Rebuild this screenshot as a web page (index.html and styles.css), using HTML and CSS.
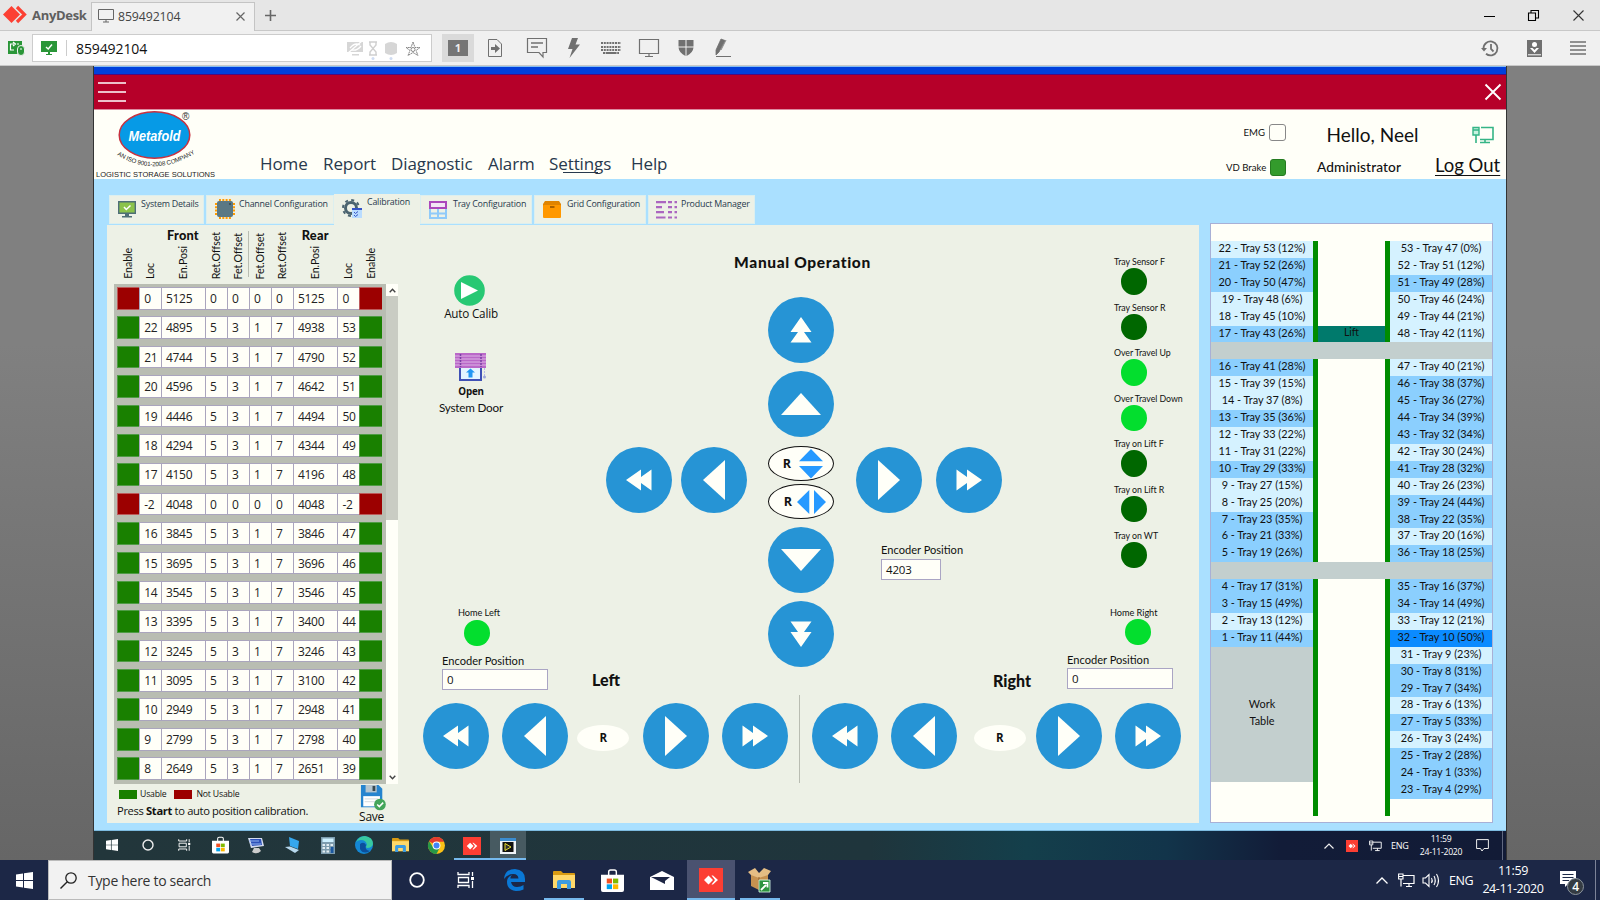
FILE: index.html
```html
<!DOCTYPE html>
<html lang="en">
<head>
<meta charset="utf-8">
<title>AnyDesk - 859492104</title>
<link rel="stylesheet" href="styles.css">
</head>
<body>
<svg class="defs" width="0" height="0">
  <symbol id="one" viewBox="0 0 66 66"><circle cx="33" cy="33" r="33" fill="#2694d5"/><path d="M22 13L44 33L22 53Z" fill="#fffff8"/></symbol>
  <symbol id="two" viewBox="0 0 66 66"><circle cx="33" cy="33" r="33" fill="#2694d5"/><path d="M20.500 22.500L31 30V22.500L46 33L31 43.500V36L20.500 43.500Z" fill="#fffff8"/></symbol>
  <symbol id="win" viewBox="0 0 17 17"><path d="M0 2.500L7 1.500V8H0ZM8 1.300L17 0V8H8ZM0 9H7V15.500L0 14.500ZM8 9H17V17L8 15.700Z" fill="#fff"/></symbol>
  <symbol id="taskview" viewBox="0 0 18 16"><path d="M1 0V2.500H12V0M1 16V13.500H12V16M1.500 5.500H11.500V10.500H1.500ZM15.500 0V4M15.500 9V16" fill="none" stroke="#fff" stroke-width="1.300"/><rect x="14" y="5" width="3" height="3" fill="#fff"/></symbol>
  <symbol id="folder" viewBox="0 0 22 18"><path d="M0 1Q0 0 1 0H8L10 2H21Q22 2 22 3V17H0Z" fill="#d99b12"/><path d="M0 4H22V17H0Z" fill="#ffd869"/><path d="M4 18V11Q4 9 6 9H16Q18 9 18 11V18H14V13H8V18Z" fill="#3c9be0"/></symbol>
  <symbol id="store" viewBox="0 0 24 24"><path d="M8 7V3Q8 1 10 1H14Q16 1 16 3V7" fill="none" stroke="#fff" stroke-width="1.500"/><path d="M0 6H24V22Q24 24 22 24H2Q0 24 0 22Z" fill="#fff"/><path d="M6 10H11.500V15H6Z" fill="#f25022"/><path d="M12.500 10H18V15H12.500Z" fill="#7fba00"/><path d="M6 16H11.500V21H6Z" fill="#00a4ef"/><path d="M12.500 16H18V21H12.500Z" fill="#ffb900"/></symbol>
  <symbol id="desk" viewBox="0 0 24 24"><path d="M0 0H24V24H0Z" fill="#fc3e33"/><path d="M5 12L9.500 7.500L14 12L9.500 16.500ZM12.500 7.500H14L19 12L14 16.500H12.500L16 12Z" fill="#fff"/></symbol>
  <symbol id="net" viewBox="0 0 17 15"><path d="M5 2.500H16V10.500H5M8 13.500H14M11 10.500V13.500M3 6V13.500" fill="none" stroke="currentColor" stroke-width="1.200"/><path d="M.6 1H5V6H.6ZM.6 3.500H5" fill="none" stroke="currentColor" stroke-width="1.100"/></symbol>
  <symbol id="hostnet" viewBox="0 0 22 18"><path d="M9 1.500H21V13.500H8M8 16.500H18M13 13.500V16.500M4 9V17" fill="none" stroke="#35b586" stroke-width="1.600"/><path d="M1 1.500H7V9H1ZM1 4H7" fill="#c9f2e0" stroke="#35b586" stroke-width="1.400"/></symbol>
</svg>

<header class="titlebar">
  <div class="brand"><svg width="24" height="17" viewBox="0 0 24 17"><path d="M0 8.500L8.500 0L17 8.500L8.500 17Z" fill="#fc4033"/><path d="M14 1L21.500 8.500L14 16" fill="none" stroke="#fc4033" stroke-width="3.200"/></svg><b>AnyDesk</b></div>
  <div class="session"><svg width="16" height="14" viewBox="0 0 16 14"><path d="M.5 .5H15.500V10.500H.5ZM8 10.500V13M5 13H11" fill="none" stroke="#666"/></svg><span>859492104</span><svg class="x" width="9" height="9" viewBox="0 0 9 9"><path d="M.5 .5L8.500 8.500M8.500 .5L.5 8.500" stroke="#666" stroke-width="1.200"/></svg></div>
  <svg class="plus" width="11" height="11" viewBox="0 0 11 11"><path d="M5.500 0V11M0 5.500H11" stroke="#666" stroke-width="1.600"/></svg>
  <div class="winbtns">
    <svg width="11" height="11" viewBox="0 0 11 11"><path d="M0 6.500H11" stroke="#000"/></svg>
    <svg width="11" height="11" viewBox="0 0 11 11"><path d="M.5 3H7.500V10.500H.5ZM3 3V.5H10.500V8H7.500" fill="none" stroke="#000" stroke-width="1.100"/></svg>
    <svg width="11" height="11" viewBox="0 0 11 11"><path d="M.5 .5L10.500 10.500M10.500 .5L.5 10.500" stroke="#333" stroke-width="1.100"/></svg>
  </div>
</header>

<div class="toolbar">
  <svg class="privacy" width="17" height="16" viewBox="0 0 17 16"><path d="M0 1H14V7L9 14H0Z" fill="#2a9638"/><path d="M6 4H2.500V10H6M5 2L7.500 4L5 6M9 4H11" fill="none" stroke="#fff" stroke-width="1.200"/><rect x="9.500" y="5.500" width="7" height="10" rx="3.500" fill="#2a9638" stroke="#f0f0f0"/><path d="M13 8V10" stroke="#fff"/></svg>
  <div class="address">
    <svg width="16" height="14" viewBox="0 0 16 14"><path d="M0 0H16V11H0ZM7 11H9V13H7ZM5 13H11V14H5Z" fill="#2a9638"/><path d="M5 6L7.200 8L11 3.500" fill="none" stroke="#fff" stroke-width="1.400"/></svg>
    <i></i><span>859492104</span>
    <svg class="marks" width="74" height="20" viewBox="0 0 74 20"><path d="M0 2H16V12H0ZM5 14H12V15.500H5Z" fill="#d6d6d6"/><path d="M1 13L15 1M3 8Q8 2 13 5M5 10Q10 11 14 6" fill="none" stroke="#fff" stroke-width="1.300"/><path d="M22 2H30M22 15H30M23 2V5L26 8.500L29 5V2M23 15V12L26 8.500L29 12V15" fill="none" stroke="#cfcfcf" stroke-width="1.400"/><path d="M38 4Q44 0 50 4V13Q44 17 38 13Z" fill="#d6d6d6"/><path d="M66 2L68 7.500H73L69 10.500L71 15.500L66 12.500L61 15.500L63 10.500L59 7.500H64Z" fill="none" stroke="#888" stroke-dasharray="2 .5"/><circle cx="66" cy="9.500" r="2" fill="none" stroke="#888"/><circle cx="26" cy="18.500" r="1.500" fill="#cfdcf2"/><circle cx="44" cy="18.500" r="1.500" fill="#cfdcf2"/></svg>
  </div>
  <div class="monitor"><b>1</b></div>
  <div class="tools">
    <svg width="20" height="20" viewBox="0 0 20 20"><path d="M3.500 1.500H12L16.500 6V18.500H3.500Z" fill="none" stroke="#707070"/><path d="M6 9H10V6L15 10.500L10 15V12H6Z" fill="#707070"/></svg>
    <svg width="20" height="20" viewBox="0 0 20 20"><path d="M.5 .5H19.500V14.500H16V19L12 14.500H.5Z" fill="none" stroke="#707070" stroke-width="1.200"/><path d="M4 5H16M4 9H11" stroke="#707070" stroke-width="1.300"/></svg>
    <svg width="20" height="20" viewBox="0 0 20 20"><path d="M8 0H14L11.500 6.500H16L5.500 20L8.500 11H4Z" fill="#707070"/></svg>
    <svg width="20" height="20" viewBox="0 0 20 20"><path d="M0 5H20M0 9H20M0 12H20" stroke="#707070" stroke-width="2" stroke-dasharray="2 .8"/><path d="M2 15H18" stroke="#707070" stroke-width="2" stroke-dasharray="2 .6 11 .6 2"/></svg>
    <svg width="20" height="20" viewBox="0 0 20 20"><path d="M.5 1.500H19.500V15.500H.5ZM10 15V18M6 18.500H14" fill="none" stroke="#707070" stroke-width="1.200"/></svg>
    <svg width="20" height="20" viewBox="0 0 20 20"><path d="M2.500 2H9.500V8.500H2.500ZM10.500 2H17.500V8.500H10.500ZM2.500 9.500H9.500V18Q3 15 2.500 9.500ZM10.500 9.500H17.500Q17 15 10.500 18Z" fill="#707070"/></svg>
    <svg width="20" height="20" viewBox="0 0 20 20"><path d="M8 1L12 2.500L6 14L3 17V12ZM13 2L8 12" fill="#707070" stroke="#707070" stroke-width=".8"/><path d="M3 18.500H18" stroke="#707070"/></svg>
  </div>
  <div class="tools-end">
    <svg width="18" height="17" viewBox="0 0 18 17"><path d="M2.500 8.500A7 7 0 1 1 5 13.800M10 4V9L12.500 11.500" fill="none" stroke="#707070" stroke-width="1.800"/><path d="M0 8H6L3 11.500Z" fill="#707070"/></svg>
    <svg width="15" height="17" viewBox="0 0 15 17"><path d="M0 0H15V17H0Z" fill="#707070"/><circle cx="7.500" cy="4.500" r="2.500" fill="#fff"/><path d="M3 8H5.500L7.500 10L9.500 8H12L7.500 13Z" fill="#fff"/><path d="M1 14.800H14" stroke="#fff"/></svg>
    <svg width="16" height="14" viewBox="0 0 16 14"><path d="M0 1H16M0 5H16M0 9H16M0 13H16" stroke="#707070" stroke-width="1.700"/></svg>
  </div>
</div>

<main class="viewport">
<div class="remote">
  <div class="strip"></div>
  <div class="appbar">
    <svg width="28" height="20" viewBox="0 0 28 20"><path d="M0 1H28M0 10H28M0 19H28" stroke="#fff" stroke-width="1.400"/></svg>
    <svg width="16" height="16" viewBox="0 0 16 16"><path d="M.5 .5L15.500 15.500M15.500 .5L.5 15.500" stroke="#fff" stroke-width="1.900"/></svg>
  </div>
  <div class="apphead">
    <svg class="logo" width="124" height="70" viewBox="0 0 124 70">
      <ellipse cx="60.500" cy="25" rx="35.300" ry="23.300" fill="#069ae6" stroke="#c8313f" stroke-width="1.500"/>
      <text class="logo-name" x="60.500" y="30.500" text-anchor="middle" textLength="52" lengthAdjust="spacingAndGlyphs">Metafold</text>
      <text class="logo-r" x="88" y="10">®</text>
      <path id="arc" d="M23 45Q60 68 100 44" fill="none"/>
      <text class="logo-iso"><textPath href="#arc">AN ISO 9001-2008 COMPANY</textPath></text>
      <text class="logo-sub" x="2" y="67" textLength="119" lengthAdjust="spacingAndGlyphs">LOGISTIC STORAGE SOLUTIONS</text>
    </svg>
    <nav class="mainnav"><span>Home</span><span>Report</span><span>Diagnostic</span><span>Alarm</span><span class="on">Settings</span><span>Help</span></nav>
    <div class="flags"><div>EMG<i></i></div><div>VD Brake<i class="g"></i></div></div>
    <div class="user"><span class="hello">Hello, Neel</span><span class="role">Administrator</span></div>
    <div class="logout"><svg width="22" height="18"><use href="#hostnet"/></svg><span>Log Out</span></div>
  </div>

  <div class="body">
    <div class="work">
      <div class="tabs">
        <div class="tab t1"><svg width="18" height="17" viewBox="0 0 18 17"><path d="M.7 .7H17.300V12.300H.7Z" fill="#8bc34a" stroke="#4f6f78" stroke-width="1.400"/><path d="M7 13H11V15H14V16.500H4V15H7Z" fill="#4f6f78"/><path d="M6 6L8.300 8.500L12.500 4.500" fill="none" stroke="#fff" stroke-width="1.500"/></svg>System Details</div>
        <div class="tab t2"><svg width="20" height="20" viewBox="0 0 20 20"><path d="M4 1H17M4 19H17M1 4V17M19 4V17" stroke="#ff9b00" stroke-width="2" stroke-dasharray="2 1.300"/><rect x="2" y="2" width="16" height="16" rx="2" fill="#5a7884"/><circle cx="15" cy="5" r="1" fill="#37474f"/></svg>Channel Configuration</div>
        <div class="tab t3"><svg width="20" height="19" viewBox="0 0 20 19"><circle cx="9" cy="9" r="5.500" fill="none" stroke="#4b6470" stroke-width="3"/><circle cx="9" cy="9" r="8" fill="none" stroke="#4b6470" stroke-width="2" stroke-dasharray="3 3.280"/><path d="M10 9H20V19H10Z" fill="#b9dcff"/><path d="M10 9H20V11H10Z" fill="#3454c6"/><path d="M12 13L13.500 14.500L16 12.500M12 16L13.500 17.500L16 15.500" fill="none" stroke="#3454c6"/></svg>Calibration</div>
        <div class="tab t4"><svg width="18" height="18" viewBox="0 0 18 18"><path d="M1 8V17H17V8M1 12.500H17M9 8V17" fill="none" stroke="#90caf9" stroke-width="2"/><path d="M1 1H17V7H1Z" fill="#f3e5f5" stroke="#ab47bc" stroke-width="2"/></svg>Tray Configuration</div>
        <div class="tab t5"><svg width="18" height="17" viewBox="0 0 18 17"><path d="M2 0H16L18 3V6H0V3Z" fill="#e08400"/><rect y="4" width="18" height="13" rx="1" fill="#ff9800"/><path d="M7 6H11.500" stroke="#7a4300" stroke-width="1.300"/></svg>Grid Configuration</div>
        <div class="tab t6"><svg width="21" height="18" viewBox="0 0 21 18"><path d="M0 1.200H10M0 6.200H6M0 11.200H8M0 16.500H9.500M12 1.200H16M12 6.200H16M12 11.200H16M12 16.500H16M18.500 1.200H21M18.500 6.200H21M18.500 11.200H21M18.500 16.500H21" stroke="#ab66c0" stroke-width="2.200"/></svg>Product Manager</div>
      </div>
      <div class="panel">
        <section class="calib">
          <div class="cols head">
            <span><em>Enable</em></span><span><em>Loc</em></span><span><b>Front</b><em>En.Posi</em></span><span><em>Ret.Offset</em></span><span class="sep"><em>Fet.Offset</em></span><span><em>Fet.Offset</em></span><span><em>Ret.Offset</em></span><span><b>Rear</b><em>En.Posi</em></span><span><em>Loc</em></span><span><em>Enable</em></span>
          </div>
          <div class="grid"><div class="rows" id="rows"></div>
            <div class="scroll"><svg width="7" height="5" viewBox="0 0 7 5"><path d="M.7 4.300L3.500 1.300L6.300 4.300" fill="none" stroke="#444" stroke-width="1.400"/></svg><i></i><svg width="7" height="5" viewBox="0 0 7 5"><path d="M.7 .7L3.500 3.700L6.300 .7" fill="none" stroke="#444" stroke-width="1.400"/></svg></div>
          </div>
          <div class="foot">
            <div><p class="legend"><i></i><span>Usable</span><i class="r"></i><span>Not Usable</span></p><p class="hint">Press <b>Start</b> to auto position calibration.</p></div>
            <div class="save"><svg width="28" height="28" viewBox="0 0 28 28"><path d="M1 0H20L24 4V24H1Z" fill="#2584cf"/><path d="M6 0H18V8H6Z" fill="#b5c5cf"/><path d="M13.500 1H16.500V6.500H13.500Z" fill="#37474f"/><path d="M3.500 12H21.500V23H3.500Z" fill="#fff"/><path d="M5 15H20M5 18H20" stroke="#cfd8dc"/><circle cx="21.500" cy="21" r="6.300" fill="#43a55a"/><path d="M18.500 21L20.800 23.300L25 19" fill="none" stroke="#fff" stroke-width="1.600"/></svg><span>Save</span></div>
          </div>
        </section>

        <section class="manual">
          <div class="upper">
            <div class="side left">
              <div class="act a1"><svg width="31" height="31" viewBox="0 0 31 31"><circle cx="15.500" cy="15.500" r="15.300" fill="#27c873"/><path d="M7 7L24 15.500L7 24Z" fill="#fff"/></svg><span>Auto Calib</span></div>
              <div class="act a2"><svg width="32" height="28" viewBox="0 0 32 28"><path d="M5 12H26V27H5Z" fill="#e3f4ff" stroke="#3f51b5" stroke-width="2"/><path d="M13.500 24.500V19.500H11L15.500 15.500L20 19.500H17.500V24.500Z" fill="#2196f3"/><path d="M0 0H31V15H0Z" fill="#ba68c8"/><path d="M0 3H31M0 6H31M0 9H31M0 12H31" stroke="#dcb5e6" stroke-width="1"/><path d="M5.500 1V14M26 1V14" stroke="#7b3fa5" stroke-width="1.500" stroke-dasharray="2 1"/><path d="M29.500 15V23" stroke="#b7bbe8" stroke-dasharray="2 1"/><circle cx="29.500" cy="24" r="1.500" fill="#9fa8da"/></svg><b>Open</b><span class="fut">System Door</span></div>
              <div class="home hl"><small>Home Left</small><i class="lamp on"></i></div>
              <div class="enc-row"><div class="enc"><label>Encoder Position</label><div class="box">0</div></div><strong>Left</strong></div>
            </div>
            <div class="middle">
              <h2>Manual Operation</h2>
              <div class="pad">
                <svg class="b c5 r1 up"><use href="#two"/></svg>
                <svg class="b c5 r2 up"><use href="#one"/></svg>
                <svg class="b c1 r3 back"><use href="#two"/></svg>
                <svg class="b c3 r3 back"><use href="#one"/></svg>
                <div class="ovals c5 r3">
                  <div class="oval"><b>R</b><svg width="24" height="30" viewBox="0 0 24 30"><path d="M12 0L24 12.300H0ZM0 17H24L12 29.500Z" fill="#2699ff"/></svg></div>
                  <div class="oval"><b>R</b><svg width="29" height="24" viewBox="0 0 29 24"><path d="M12.300 0V24L0 12ZM17 0V24L29 12Z" fill="#2699ff"/></svg></div>
                </div>
                <svg class="b c7 r3"><use href="#one"/></svg>
                <svg class="b c9 r3"><use href="#two"/></svg>
                <svg class="b c5 r4 down"><use href="#one"/></svg>
                <div class="enc mid r4"><label>Encoder Position</label><div class="box">4203</div></div>
                <svg class="b c5 r5 down"><use href="#two"/></svg>
              </div>
            </div>
            <div class="side right">
              <div class="sensors">
                <div><small>Tray Sensor F</small><i class="lamp"></i></div>
                <div><small>Tray Sensor R</small><i class="lamp"></i></div>
                <div><small>Over Travel Up</small><i class="lamp on"></i></div>
                <div><small>Over Travel Down</small><i class="lamp on"></i></div>
                <div><small>Tray on Lift F</small><i class="lamp"></i></div>
                <div><small>Tray on Lift R</small><i class="lamp"></i></div>
                <div><small>Tray on WT</small><i class="lamp"></i></div>
              </div>
              <div class="home hr"><small>Home Right</small><i class="lamp on"></i></div>
              <div class="enc-row"><strong>Right</strong><div class="enc"><label>Encoder Position</label><div class="box">0</div></div></div>
            </div>
          </div>
          <div class="lower">
            <div class="jog"><svg class="b back"><use href="#two"/></svg><svg class="b back"><use href="#one"/></svg><b class="reset">R</b><svg class="b"><use href="#one"/></svg><svg class="b"><use href="#two"/></svg></div>
            <div class="jog"><svg class="b back"><use href="#two"/></svg><svg class="b back"><use href="#one"/></svg><b class="reset">R</b><svg class="b"><use href="#one"/></svg><svg class="b"><use href="#two"/></svg></div>
          </div>
        </section>
      </div>
    </div>
    <aside class="rack" id="rack"></aside>
  </div>

  <div class="rtask">
    <div class="slots">
      <span><svg width="12" height="12"><use href="#win"/></svg></span>
      <span><svg width="12" height="12" viewBox="0 0 12 12"><circle cx="6" cy="6" r="5" fill="none" stroke="#eee" stroke-width="1.400"/></svg></span>
      <span><svg width="13" height="12"><use href="#taskview"/></svg></span>
      <span><svg width="17" height="18"><use href="#store"/></svg></span>
      <span><svg width="18" height="17" viewBox="0 0 18 17"><path d="M1 1H15L17 9L4 11Z" fill="#d5dcee"/><path d="M3 2L14 2L15 8L5 9Z" fill="#2d50b8"/><path d="M2 4H12M3 7H14" stroke="#8fb2f0"/><path d="M7 11H12L14 14Q10 18 5 15Z" fill="#ccc"/></svg></span>
      <span><svg width="17" height="16" viewBox="0 0 17 16"><path d="M5 0L15 4L14 12L6 9Z" fill="#35a7ee"/><path d="M1 10L6 9.500L15 13L11 16Z" fill="#b8d9ee"/></svg></span>
      <span><svg width="14" height="17" viewBox="0 0 14 17"><path d="M0 0H14V17H0Z" fill="#7d9cae"/><path d="M1.500 1.500H12.500V5H1.500Z" fill="#cdf0ff"/><path d="M1.500 8H13M1.500 11H13M1.500 14.500H13" stroke="#e2edf2" stroke-width="2" stroke-dasharray="2.500 1.500"/><path d="M9.500 10H12.500V16H9.500Z" fill="#1b58a0"/></svg></span>
      <span><svg width="18" height="18" viewBox="0 0 18 18"><circle cx="9" cy="9" r="9" fill="#1487d4"/><path d="M1 6Q4 0 10 0Q18 1 18 8Q17 12 12 12Q10 11 12 9Q11 4 6 4Q3 4 1 6Z" fill="#38c9a0"/><path d="M5 8Q9 5 11 9Q9 14 15 15Q8 19 5 13Z" fill="#0b4f9c"/></svg></span>
      <span><svg width="17" height="14"><use href="#folder"/></svg></span>
      <span><svg width="17" height="17" viewBox="0 0 18 18"><circle cx="9" cy="9" r="9" fill="#fbc116"/><path d="M9 9L1.200 4.500A9 9 0 0 1 17 5H9Z" fill="#e33b2e"/><path d="M1.200 4.500A9 9 0 0 0 9 18L12.500 11L5.500 11Z" fill="#279847"/><circle cx="9" cy="9" r="4.200" fill="#fff"/><circle cx="9" cy="9" r="3.200" fill="#4285f4"/></svg></span>
      <span class="run"><svg width="18" height="18"><use href="#desk"/></svg></span>
      <span class="run act"><svg width="16" height="16" viewBox="0 0 16 16"><path d="M0 0H16V16H0Z" fill="#f0f4f8"/><path d="M0 0H16V3H0Z" fill="#3b8ccf"/><path d="M2.500 4H13.500V14H2.500Z" fill="#111"/><path d="M5 5.500L11 9L5 12.500Z" fill="#333" stroke="#e8df30"/></svg></span>
    </div>
    <div class="rtray">
      <svg width="10" height="6" viewBox="0 0 10 6"><path d="M.5 5.500L5 1L9.500 5.500" fill="none" stroke="#eee" stroke-width="1.200"/></svg>
      <svg width="12" height="12"><use href="#desk"/></svg>
      <svg class="net" width="13" height="12"><use href="#net"/></svg>
      <span class="eng">ENG</span><span class="clock">11:59<br>24-11-2020</span>
      <svg width="13" height="13" viewBox="0 0 13 13"><path d="M.6 .6H12.400V9.500H8L6 12L4.500 9.500H.6Z" fill="none" stroke="#eee"/></svg><i></i>
    </div>
  </div>
</div>
</main>

<footer class="taskbar">
  <span class="start"><svg width="17" height="17"><use href="#win"/></svg></span>
  <div class="search"><svg width="17" height="17" viewBox="0 0 17 17"><circle cx="11" cy="6" r="5.200" fill="none" stroke="#222" stroke-width="1.300"/><path d="M7.300 9.700L.5 16.500" stroke="#222" stroke-width="1.400"/></svg>Type here to search</div>
  <div class="slots">
    <span><svg width="16" height="16" viewBox="0 0 16 16"><circle cx="8" cy="8" r="6.800" fill="none" stroke="#fff" stroke-width="1.800"/></svg></span>
    <span><svg width="18" height="16"><use href="#taskview"/></svg></span>
    <span><svg width="21" height="22" viewBox="0 0 21 22"><path d="M0 10Q1 0 11 0Q21 1 21 10V13H7Q8 18 13 18Q17 18 19.500 16V20.500Q16 22 12 22Q3 21 3 13Q3 8 8 6Q6 8 6.500 9.500H14.500Q14 5 9.500 5Q3 5 0 10Z" fill="#0a78d6"/></svg></span>
    <span class="run"><svg width="22" height="18"><use href="#folder"/></svg></span>
    <span><svg width="23" height="23"><use href="#store"/></svg></span>
    <span><svg width="24" height="19" viewBox="0 0 24 19"><path d="M12 0L24 6V19H0V6Z" fill="#fff"/><path d="M1 6L20 6L15 10V13L11 11Z" fill="#1c2544"/></svg></span>
    <span class="run act"><svg width="24" height="24"><use href="#desk"/></svg></span>
    <span class="run"><svg width="24" height="25" viewBox="0 0 24 25"><path d="M3 6L11 9L20 5V19L11 22L3 18Z" fill="#c69150"/><path d="M0 4L7 0L11 5L16 0L23 3L20 7L11 10L3 7Z" fill="#e5bd84"/><path d="M11 9V22" stroke="#8d5f2b"/><path d="M11 12H22V24H11Z" fill="#2e9440" stroke="#dfe" stroke-width=".8"/><path d="M13 22L18 17M15 15H19.500V19.500" fill="none" stroke="#fff" stroke-width="1.800"/></svg></span>
  </div>
  <div class="tray">
    <svg width="12" height="7" viewBox="0 0 12 7"><path d="M.5 6.500L6 1L11.500 6.500" fill="none" stroke="#fff" stroke-width="1.300"/></svg>
    <svg class="net" width="17" height="15"><use href="#net"/></svg>
    <svg width="18" height="15" viewBox="0 0 18 15"><path d="M1 5H3.500L7 1.500V13.500L3.500 10H1ZM9.500 5Q11 7.500 9.500 10M12 3Q14.500 7.500 12 12M14.500 1Q18.500 7.500 14.500 14" fill="none" stroke="#fff" stroke-width="1.100"/></svg>
    <span class="eng">ENG</span><span class="clock">11:59<br>24-11-2020</span>
    <svg class="note" width="25" height="24" viewBox="0 0 25 24"><path d="M0 0H16V13H8L5 16V13H0Z" fill="#fff"/><path d="M2.500 3.500H13.500M2.500 6.500H13.500M2.500 9.500H9" stroke="#1c2a48" stroke-width="1.200"/><circle cx="15.500" cy="15.500" r="8" fill="#343b42" stroke="#8b949e"/><text x="15.500" y="20" text-anchor="middle">4</text></svg><i></i>
  </div>
</footer>
<script src="app.js"></script>
</body>
</html>
```

FILE: styles.css
```css
* { box-sizing: border-box; }
body { margin: 0; width: 1600px; height: 900px; overflow: hidden; display: flex; flex-direction: column; font-family: "Open Sans", "Noto Sans", sans-serif; color: #111; }
svg { flex: none; display: block; overflow: visible; }
.defs { position: absolute; }
i { font-style: normal; }

/* AnyDesk window */
.titlebar { height: 31px; background: #e6e6e6; border-bottom: 1px solid #c8c8c8; display: flex; align-items: center; }
.brand { width: 91px; padding-left: 3px; display: flex; align-items: center; gap: 5px; font-size: 13px; color: #5f5f5f; letter-spacing: -.3px; }
.brand svg { margin-top: -2px; }
.session { width: 164px; height: 29px; margin-top: 3px; background: #f1f1f1; border: 1px solid #c4c4c4; border-bottom: 0; display: flex; align-items: center; padding: 0 9px 2px 6px; font-size: 12.3px; color: #444; letter-spacing: -.1px; }
.session span { margin-left: 4px; }
.session .x { margin-left: auto; }
.plus { margin-left: 10px; }
.winbtns { margin-left: auto; display: flex; gap: 33.500px; padding-right: 16.500px; }
.toolbar { height: 35px; background: #f0f0f0; border-bottom: 1px solid #c8c8c8; display: flex; align-items: center; padding-left: 8px; }
.privacy { margin-right: 7px; }
.address { width: 400px; height: 28px; background: #fff; border: 1px solid #ccc; display: flex; align-items: center; padding: 0 10px 0 8px; font-size: 14px; letter-spacing: -.1px; }
.address i { width: 1px; height: 16px; background: #ccc; margin: 0 9px; }
.marks { margin: 4px 0 0 auto; }
.monitor { width: 32px; height: 28px; margin-left: 10px; background: #dadada; display: flex; align-items: center; justify-content: center; }
.monitor b { width: 20px; height: 16px; background: #757575; color: #eee; font-size: 11px; line-height: 16px; text-align: center; }
.tools { margin-left: 11px; display: flex; gap: 17.300px; }
.tools svg:first-child { margin-right: 4.500px; }
.tools-end { margin-left: auto; display: flex; align-items: center; gap: 28px; padding-right: 14px; }

/* Remote screen */
.viewport { height: 794px; background: linear-gradient(#808080 0, #808080 35%, #666 100%); display: flex; padding-left: 93px; }
.remote { width: 1414px; border: solid #333; border-width: 0 1px; display: flex; flex-direction: column; }
.strip { height: 9px; background: #0040dc; border-top: 1px solid #86bdf0; border-bottom: 1px solid #4a0a80; }
.appbar { height: 35px; background: #b60029; border-bottom: 1px solid #dc8ba0; display: flex; justify-content: space-between; align-items: center; padding: 0 5px 0 4px; }
.apphead { height: 69px; background: #fffff8; display: flex; }
.logo-name { font: italic bold 15px "Liberation Sans", sans-serif; fill: #fff; }
.logo-r { font: 10px "Liberation Sans", sans-serif; fill: #333; }
.logo-iso { font: 6.200px "Liberation Sans", sans-serif; fill: #222; letter-spacing: -.1px; }
.logo-sub { font: 7.300px "Liberation Sans", sans-serif; fill: #222; }
.mainnav { width: 1008px; padding: 41px 0 0 42px; display: grid; grid-template-columns: 63px 68px 97px 61px 82px 60px; font-size: 17px; line-height: 26px; color: #28394d; letter-spacing: -.1px; }
.mainnav span { justify-self: start; }
.mainnav .on { background: linear-gradient(#28394d, #28394d) 14px 21px / 35px 1px no-repeat; }
.flags { width: 60px; padding: 14px 0 0; display: flex; flex-direction: column; gap: 18px; font: 9.600px Lato, sans-serif; margin-right: 0; }
.flags div { display: flex; justify-content: flex-end; align-items: center; gap: 4px; white-space: nowrap; height: 17px; }
.flags i { width: 17px; height: 17px; border: 1px solid #888; border-radius: 3px; background: #fffff8; }
.flags i.g { background: #339b2c; border-color: #257b20; }
.user { width: 148px; display: flex; flex-direction: column; align-items: center; font-family: Lato, sans-serif; }
.hello { font-size: 19px; line-height: 24px; margin: 13px 0 0 25px; }
.role { font-size: 13.700px; line-height: 20px; margin: 10px 2px 0 0; font-weight: 500; letter-spacing: .1px; }
.logout { width: 68px; display: flex; flex-direction: column; font: 18.500px Lato, sans-serif; white-space: nowrap; color: #111; }
.logout svg { margin: 16px 0 0 38px; }
.logout span { text-decoration: underline; line-height: 24px; margin: 9px 0 0 1px; text-underline-offset: 3px; }

.body { height: 652px; background: #aae0ff; border-bottom: 1px solid #7dbbe0; display: flex; padding: 15px 0 0 13px; }
.work { width: 1092px; }
.tabs { height: 31px; display: flex; padding: 1px 0 0 2px; }
.tab { height: 29px; margin-right: 2px; background: #edf1e6; border: 1px solid #dcefef; display: flex; align-items: flex-start; padding: 2px 0 0 8px; gap: 6px; font-size: 8.900px; line-height: 11px; color: #28394d; white-space: nowrap; letter-spacing: -.2px; }
.tab svg { margin-top: 3px; }
.t1 { width: 95px; gap: 5px; } .t2 { width: 128px; margin-right: 0; gap: 4px; } .t2 svg { margin-top: 1px; }
.t3 { width: 86px; height: 31px; margin: -1px 0 0; border: 0; gap: 5px; }
.t4 { width: 112px; } .t5 { width: 112px; } .t6 { width: 107px; gap: 4px; padding-left: 7px; }
.panel { height: 598px; background: #edf1e6; display: flex; }

/* Calibration table */
.calib { width: 291px; padding-left: 7px; }
.cols { display: grid; grid-template-columns: 22.300px 21.700px 44px 22px 22px 22px 22px 44.500px 22px 22.500px; }
.head { height: 59px; padding: 0 0 5px 3px; font: 10.700px Lato, sans-serif; }
.head span { display: flex; flex-direction: column; align-items: center; justify-content: flex-end; }
.head em { font-style: normal; writing-mode: vertical-rl; transform: rotate(180deg); line-height: 12px; letter-spacing: -.1px; }
.head b { font-size: 12.800px; line-height: 14px; margin-bottom: 4px; letter-spacing: .2px; font-weight: 900; }
.head .sep { background: linear-gradient(#b9bdb2, #b9bdb2) right 6px / 1px 46px no-repeat; }
.grid { height: 500px; display: flex; }
.rows { width: 272px; height: 500px; background: #b9bdb2; padding: 3px 0 0 3px; overflow: hidden; }
.row { height: 29.400px; }
.row > span { height: 22.700px; border: 1px solid #aaa5bd; border-right: 0; background: #fffff8; font-size: 12px; line-height: 22px; padding-left: 4px; letter-spacing: -.3px; color: #222; }
.row > .ok { background: #198000; border-color: #4f9c45; }
.row > .bad { background: #9c0000; border-color: #bd5a5a; }
.scroll { width: 12px; background: #fffff8; display: flex; flex-direction: column; align-items: center; padding: 4px 0; }
.scroll i { width: 12px; height: 224px; margin: 3px 0 auto; background: #c9ccc3; }
.foot { display: flex; }
.foot > div:first-child { width: 245px; }
.foot p { margin: 0; }
.legend { display: flex; align-items: center; height: 20px; padding-left: 5px; font: 8.700px "Open Sans", sans-serif; letter-spacing: -.2px; }
.legend i { width: 18px; height: 9px; background: #198000; margin-right: 3px; }
.legend i.r { background: #9c0000; margin: 0 5px 0 7px; }
.hint { padding-left: 3px; font-size: 11.200px; line-height: 13px; letter-spacing: -.35px; }
.save { width: 28px; font-size: 12px; line-height: 12px; text-align: center; padding-top: 1px; }
.save svg { height: 26px; }
.save span { margin-left: -3px; letter-spacing: -.3px; }

/* Manual operation */
.manual { width: 801px; }
.upper { height: 470px; display: flex; }
.side { display: flex; flex-direction: column; }
.left { width: 208px; }
.act { display: flex; flex-direction: column; align-items: center; width: 146px; font-size: 11.700px; line-height: 15px; letter-spacing: -.2px; }
.a1 { padding-top: 50px; }
.a1 svg { margin-left: -4px; }
.a2 { padding-top: 32px; font-size: 9.800px; }
.a2 svg { margin-bottom: 3px; }
.a2 .fut { font: 11.700px/14px Lato, sans-serif; margin-top: 1px; }
.home { display: flex; flex-direction: column; align-items: center; }
small { font: 8.800px/12px Lato, sans-serif; white-space: nowrap; display: block; letter-spacing: -.05px; }
.home small { font-size: 9.200px; }
.lamp { display: block; width: 25.500px; height: 26.500px; border-radius: 50%; background: #006700; }
.lamp.on { background: #03de2e; }
.hl { width: 162px; margin-top: auto; gap: 1px; }
.hl .lamp { margin-left: -4px; }
.enc-row { display: flex; align-items: flex-end; }
.enc label { display: block; font: 11.100px/14px Lato, sans-serif; white-space: nowrap; }
.box { height: 21px; border: 1px solid #aaa5c4; background: #fffff8; font-size: 11.500px; line-height: 19px; padding-left: 4px; letter-spacing: -.2px; }
.enc-row .enc { width: 106px; flex: none; }
.left .enc-row { margin: 8px 0 5px 44px; }
.enc-row label { margin-bottom: 1px; }
.left strong { margin-left: 44px; }
strong { font: 900 16px/20px Lato, sans-serif; }
.middle { width: 397px; }
h2 { margin: 0; padding-top: 27px; height: 72px; text-align: center; font: 900 15.500px/20px Lato, sans-serif; letter-spacing: .65px; padding-right: 4px; }
.b { width: 66px; height: 66px; }
.up { transform: rotate(-90deg); } .down { transform: rotate(90deg); } .back { transform: rotate(180deg); }
.pad { display: grid; grid-template-columns: 66px 9px 66px 21px 66px 22px 66px 13.500px 66px; grid-template-rows: 66px 66px 74px 66px 66px; row-gap: 8px; }
.c1 { grid-column: 1; } .c3 { grid-column: 3; } .c5 { grid-column: 5; } .c7 { grid-column: 7; } .c9 { grid-column: 9; }
.r1 { grid-row: 1; } .r2 { grid-row: 2; } .r3 { grid-row: 3; margin-top: 2px; } .r4 { grid-row: 4; } .r5 { grid-row: 5; }
.ovals { display: flex; flex-direction: column; gap: 3px; margin-top: 1px; }
.oval { height: 36px; border: 1px solid #111; border-radius: 50%; background: #fffff8; display: flex; align-items: center; justify-content: flex-end; gap: 8px; padding-right: 10px; font-size: 12.500px; }
.oval + .oval { padding-right: 7px; gap: 5px; }
.mid { grid-column: 7 / 10; margin: 16px 0 0 25px; }
.mid .box { width: 60px; margin-top: 2px; }
.right { width: 196px; }
.sensors { padding: 31px 0 0 111px; }
.sensors > div { height: 45.600px; }
.sensors .lamp { margin: 0 0 0 7px; }
.hr { margin: auto 0 0 107px; width: 60px; align-items: flex-start; gap: 0; }
.hr .lamp { margin-left: 15px; }
.right .enc-row { margin: 8px 0 6px -10px; }
.right strong { width: 74px; margin-bottom: -2px; }
.lower { display: flex; padding-left: 25px; }
.jog { display: flex; align-items: center; height: 88px; width: 377px; padding-bottom: 6px; gap: 13.200px; }
.jog:first-child { border-right: 1px solid #b9bdb2; margin-right: 11.500px; }
.reset { flex: none; width: 52px; height: 26px; margin: 3px 0 0 -4px; border-radius: 50%; background: #fffff8; text-align: center; font-size: 11.500px; line-height: 26px; }
.jog:last-child .reset { margin: 3px -3px 0 4px; }

/* Rack */
.rack { width: 283px; height: 600px; margin: 29px 0 0 11px; border: 1px solid #a8b0d6; background: #fffff8; padding-top: 17px; display: grid; grid-template-columns: 102px 5px 67px 5px 102px; grid-template-rows: repeat(34, 16.920px); font: 10.900px/13.600px Lato, sans-serif; text-align: center; }
.tray-cell { background: #d5f2ff; white-space: nowrap; }
.tray-cell.full { background: #8bcffe; }
.tray-cell.sel { background: #0b8bff; }
.rack .l { grid-column: 1; } .rack .r { grid-column: 5; }
.rail { background: #008c00; grid-row: 1 / 35; }
.rail.a { grid-column: 2; } .rail.z { grid-column: 4; }
.lift { grid-column: 3; grid-row: 6; background: #007a6c; font-size: 10.500px; }
.band { grid-column: 1 / 6; background: #c3cfce; z-index: 1; }
.table { grid-column: 1; grid-row: 25 / 33; background: #c3cfce; line-height: 17px; padding-top: 48px; }

/* Taskbars */
.rtask { height: 29px; background: linear-gradient(90deg, #22363b 0, #1f353c 55%, #143f4b 66%, #12344a 76%, #121c38 84%, #121b36 100%); display: flex; justify-content: space-between; }
.slots { display: flex; }
.slots span { display: flex; align-items: center; justify-content: center; height: 100%; }
.rtask .slots span { width: 36px; border-bottom: 2px solid transparent; border-top: 1px solid transparent; }
.slots .act { background: #475a61; }
.slots .run, .rtask .slots .run { border-bottom: 2px solid #76b9ed; border-top: 2px solid transparent; }
.rtray, .tray { display: flex; align-items: center; color: #fff; }
.clock { text-align: center; }
.rtray svg:nth-child(2) { margin-left: 12px; } .rtray .net { margin-left: 11px; }
.rtray .eng { margin-left: 9px; width: 19px; font-size: 9px; } .rtray .clock { width: 46px; margin: 0 12px 0 8px; line-height: 13px; }
.rtray { font-size: 8.700px; letter-spacing: -.3px; }
.rtray i { width: 1px; height: 29px; background: #606880; margin: 0 3px 0 13px; }
.taskbar { height: 40px; background: #1c2746; display: flex; }
.start { width: 48px; display: flex; align-items: center; justify-content: center; }
.search { width: 344px; background: #f2f2f2; border: 1px solid #bbb; display: flex; align-items: center; padding-left: 11px; gap: 11px; font-size: 14px; letter-spacing: -.3px; color: #333; }
.taskbar .slots span { width: 49px; }
.taskbar .slots .run { width: 40px; margin: 0 4.500px; }
.taskbar .slots .act { width: 48px; margin: 0 .5px; background: #4a5270; }
.tray { margin-left: auto; font-size: 12.500px; letter-spacing: -.4px; }
.tray .net { margin-left: 10px; } .tray .net + svg { margin-left: 7px; }
.tray .eng { width: 24px; margin-left: 9px; } .tray .clock { width: 62px; margin: 0 16px 0 9px; line-height: 18px; }
.note { margin-top: 6px; } .note text { font: 600 12px "Open Sans", sans-serif; fill: #fff; }
.tray i { width: 1px; height: 40px; background: #7c8398; margin: 0 4px 0 10px; }
```

FILE: app.js
```js
const calibration = [
  [0, 5125, 0, 0, 0, 0, 5125, 0], [22, 4895, 5, 3, 1, 7, 4938, 53], [21, 4744, 5, 3, 1, 7, 4790, 52],
  [20, 4596, 5, 3, 1, 7, 4642, 51], [19, 4446, 5, 3, 1, 7, 4494, 50], [18, 4294, 5, 3, 1, 7, 4344, 49],
  [17, 4150, 5, 3, 1, 7, 4196, 48], [-2, 4048, 0, 0, 0, 0, 4048, -2], [16, 3845, 5, 3, 1, 7, 3846, 47],
  [15, 3695, 5, 3, 1, 7, 3696, 46], [14, 3545, 5, 3, 1, 7, 3546, 45], [13, 3395, 5, 3, 1, 7, 3400, 44],
  [12, 3245, 5, 3, 1, 7, 3246, 43], [11, 3095, 5, 3, 1, 7, 3100, 42], [10, 2949, 5, 3, 1, 7, 2948, 41],
  [9, 2799, 5, 3, 1, 7, 2798, 40], [8, 2649, 5, 3, 1, 7, 2651, 39]
];
document.getElementById('rows').innerHTML = calibration.map(r => {
  const flag = `<span class="${r[0] > 0 ? 'ok' : 'bad'}"></span>`;
  return `<div class="cols row">${flag}${r.map(v => `<span>${v}</span>`).join('')}${flag}</div>`;
}).join('');

// [location, tray, fill %]; null marks a structural band
const front = [[22,53,12],[21,52,26],[20,50,47],[19,48,6],[18,45,10],[17,43,26],null,[16,41,28],[15,39,15],[14,37,8],[13,35,36],[12,33,22],[11,31,22],[10,29,33],[9,27,15],[8,25,20],[7,23,35],[6,21,33],[5,19,26],null,[4,17,31],[3,15,49],[2,13,12],[1,11,44]];
const rear = [[53,47,0],[52,51,12],[51,49,28],[50,46,24],[49,44,21],[48,42,11],null,[47,40,21],[46,38,37],[45,36,27],[44,34,39],[43,32,34],[42,30,24],[41,28,32],[40,26,23],[39,24,44],[38,22,35],[37,20,16],[36,18,25],null,[35,16,37],[34,14,49],[33,12,21],[32,10,50],[31,9,23],[30,8,31],[29,7,34],[28,6,13],[27,5,33],[26,3,24],[25,2,28],[24,1,33],[23,4,29]];
const cells = (list, side) => list.map((t, i) => t
  ? `<div class="tray-cell ${side} ${t[2] >= 50 ? 'sel' : t[2] > 24 ? 'full' : ''}" style="grid-row:${i + 1}">${t[0]} - Tray ${t[1]} (${t[2]}%)</div>`
  : '').join('');
document.getElementById('rack').innerHTML =
  '<div class="rail a"></div><div class="rail z"></div>' + cells(front, 'l') + cells(rear, 'r') +
  '<div class="lift">Lift</div><div class="band" style="grid-row:7"></div><div class="band" style="grid-row:20"></div>' +
  '<div class="table">Work<br>Table</div>';
```
